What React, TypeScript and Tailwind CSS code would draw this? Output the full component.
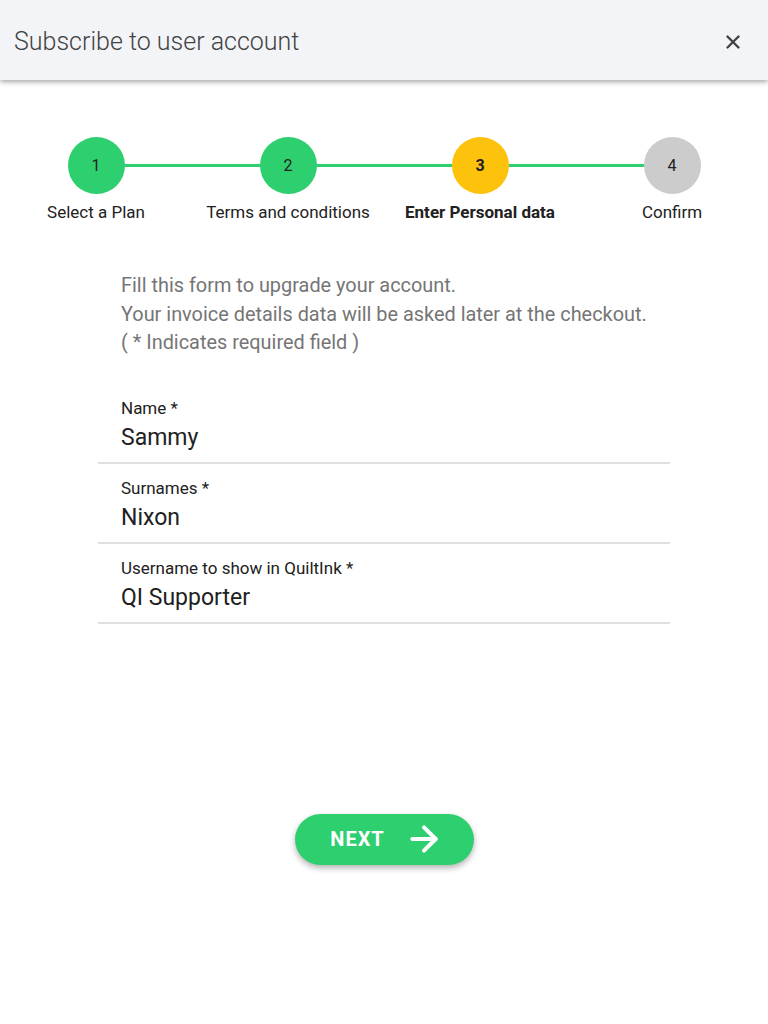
import { X, ArrowRight } from "lucide-react";

const steps = [
  { n: 1, label: "Select a Plan", state: "done" },
  { n: 2, label: "Terms and conditions", state: "done" },
  { n: 3, label: "Enter Personal data", state: "active" },
  { n: 4, label: "Confirm", state: "todo" },
];

const fields = [
  { label: "Name *", value: "Sammy" },
  { label: "Surnames *", value: "Nixon" },
  { label: "Username to show in QuiltInk *", value: "QI Supporter" },
];

export default function App() {
  return (
    <div className="min-h-[1024px] bg-white text-[#212121]" style={{ fontFamily: "Roboto, 'Liberation Sans', sans-serif" }}>
      {/* header */}
      <div className="h-[80px] bg-[#f3f4f8] flex items-center justify-between pl-[14px] pr-[24px] pt-[3px] shadow-[0_2px_5px_rgba(0,0,0,0.35)] relative z-10">
        <h1 className="text-[25px] font-light text-[#424242]">Subscribe to user account</h1>
        <X size={22} strokeWidth={2.6} className="text-[#424242]" />
      </div>

      {/* stepper */}
      <div className="relative mt-[57px] grid grid-cols-4">
        <div className="absolute left-[96px] right-[96px] top-[27px] h-[3px] bg-[#2ecf6f]" />
        {steps.map((s) => (
          <div key={s.n} className="relative flex flex-col items-center">
            <div
              className={`w-[57px] h-[57px] rounded-full flex items-center justify-center text-[16px] ${
                s.state === "done"
                  ? "bg-[#2ecf6f]"
                  : s.state === "active"
                  ? "bg-[#fdc20c] font-bold"
                  : "bg-[#cccccc]"
              }`}
            >
              {s.n}
            </div>
            <div className={`mt-[6px] text-[17px] leading-[24px] ${s.state === "active" ? "font-bold" : ""}`}>{s.label}</div>
          </div>
        ))}
      </div>

      {/* intro */}
      <div className="mt-[48px] pl-[121px] text-[19.9px] leading-[28.5px] text-[#757575]">
        <p>Fill this form to upgrade your account.</p>
        <p>Your invoice details data will be asked later at the checkout.</p>
        <p>( * Indicates required field )</p>
      </div>

      {/* fields */}
      <div className="mx-[98px] w-[572px] mt-[26px]">
        {fields.map((f) => (
          <div key={f.label} className="h-[80px] border-b-2 border-[#e0e0e0] pl-[23px] pt-[13px]">
            <div className="text-[17px] leading-[22px]">{f.label}</div>
            <div className="text-[23px] leading-[30px] mt-[4px]">{f.value}</div>
          </div>
        ))}
      </div>

      {/* next */}
      <div className="flex justify-center mt-[190px]">
        <button className="w-[179px] h-[51px] rounded-full bg-[#2ecf6f] text-white flex items-center justify-center gap-[19px] pl-[6px] shadow-[0_3px_6px_rgba(0,0,0,0.3)]">
          <span className="text-[20px] font-bold tracking-[1px]">NEXT</span>
          <ArrowRight size={40} strokeWidth={2.4} />
        </button>
      </div>
    </div>
  );
}
